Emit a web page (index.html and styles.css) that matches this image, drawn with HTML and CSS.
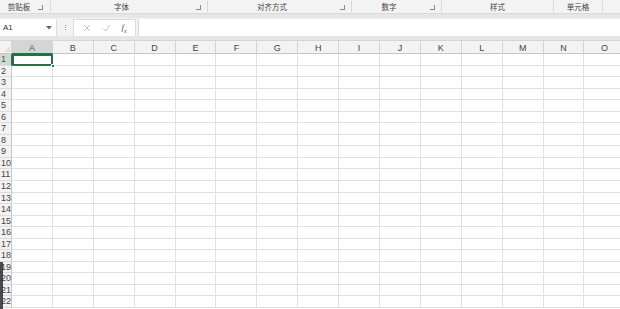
FILE: index.html
```html
<!DOCTYPE html>
<html lang="zh-CN">

<head>
    <meta charset="UTF-8">
    <title>Excel</title>
    <link rel="stylesheet" href="styles.css">
</head>

<body>
    <div class="ribbon-groups">
        <div class="group g-clip"><span class="label">剪贴板</span><span class="launcher"></span></div>
        <div class="group g-font"><span class="label">字体</span><span class="launcher"></span></div>
        <div class="group g-align"><span class="label">对齐方式</span><span class="launcher"></span></div>
        <div class="group g-num"><span class="label">数字</span><span class="launcher"></span></div>
        <div class="group g-style"><span class="label">样式</span></div>
        <div class="group g-cell"><span class="label">单元格</span></div>
        <div class="group g-rest"></div>
    </div>
    <div class="ribbon-gap"></div>

    <div class="formula-bar">
        <div class="name-box">
            <span>A1</span>
            <svg width="6" height="4" viewBox="0 0 6 4"><path d="M0 0h6L3 3.5z" fill="#666" /></svg>
        </div>
        <div class="dots"><i></i><i></i><i></i></div>
        <div class="fx-box">
            <svg width="8" height="8" viewBox="0 0 8 8"><path d="M1 1l6 6M7 1L1 7" stroke="#c4c4c4" stroke-width="1" /></svg>
            <svg width="9" height="8" viewBox="0 0 9 8"><path d="M1 4.5l2.5 2.5L8 1" stroke="#c4c4c4" stroke-width="1" fill="none" /></svg>
            <span class="fx">f<sub>x</sub></span>
        </div>
        <div class="formula-input"></div>
    </div>
    <div class="sheet-gap"></div>

    <div class="sheet" id="sheet"></div>
    <div class="artifact"></div>

    <script>
        const cols = "ABCDEFGHIJKLMNO".split("");
        const sheet = document.getElementById("sheet");
        let html = '<div class="corner"></div>';
        cols.forEach((c, i) => {
            html += `<div class="col-head${i === 0 ? ' active' : ''}">${c}</div>`;
        });
        for (let r = 1; r <= 22; r++) {
            html += `<div class="row-head${r === 1 ? ' active' : ''}">${r}</div>`;
            cols.forEach((c, i) => {
                const sel = r === 1 && i === 0 ? ' selected' : '';
                html += `<div class="cell${sel}"></div>`;
            });
        }
        sheet.innerHTML = html;
    </script>
</body>

</html>
```

FILE: styles.css
```css
body {
    margin: 0;
    width: 620px;
    height: 309px;
    overflow: hidden;
    background: #fff;
    font-family: "Noto Sans CJK SC", "Liberation Sans", sans-serif;
    color: #444;
    position: relative;
}

.ribbon-groups {
    display: flex;
    height: 13px;
    background: #f3f3f3;
    font-size: 7.5px;
    line-height: 13px;
}

.group {
    display: flex;
    align-items: center;
    border-right: 1px solid #d9d9d9;
    box-sizing: border-box;
    height: 11px;
    margin-top: 1px;
}

.group .label {
    flex: 1;
    text-align: center;
    color: #444;
}

.g-clip { width: 51px; }
.g-clip .label { flex: none; width: 38px; }
.g-font { width: 157px; }
.g-align { width: 144px; }
.g-num { width: 90px; }
.g-style { width: 112px; }
.g-cell { width: 49px; }
.g-rest { flex: 1; border-right: none; }

.launcher {
    width: 4px;
    height: 4px;
    border-right: 1px solid #888;
    border-bottom: 1px solid #888;
    margin: 2px 6px 0 4px;
}

.g-clip .launcher { margin-left: 0; }

.ribbon-gap {
    height: 5px;
    background: #e6e6e6;
    border-top: 1px solid #dadada;
    box-sizing: border-box;
}

.formula-bar {
    display: flex;
    align-items: center;
    height: 18px;
    background: #f3f3f3;
    padding-top: 1px;
    box-sizing: border-box;
}

.name-box {
    width: 57px;
    height: 17px;
    background: #fff;
    border-right: 1px solid #dcdcdc;
    box-sizing: border-box;
    display: flex;
    align-items: center;
    justify-content: space-between;
    padding: 0 4px 0 3px;
    font-family: "Liberation Sans", sans-serif;
    font-size: 8px;
    color: #333;
}

.dots {
    width: 16px;
    display: flex;
    flex-direction: column;
    align-items: center;
    gap: 1px;
}

.dots i {
    width: 1px;
    height: 1px;
    background: #999;
}

.fx-box {
    width: 63px;
    height: 17px;
    background: #fff;
    border: 1px solid #dcdcdc;
    border-bottom: none;
    box-sizing: border-box;
    display: flex;
    align-items: center;
    justify-content: space-around;
    padding: 0 3px 0 4px;
}

.fx {
    font-family: "Liberation Serif", serif;
    font-style: italic;
    font-size: 9px;
    color: #555;
}

.fx sub {
    font-size: 6px;
}

.formula-input {
    flex: 1;
    height: 17px;
    margin-left: 2px;
    background: #fff;
    border-left: 1px solid #dcdcdc;
}

.sheet-gap {
    height: 5px;
    background: #e6e6e6;
    border-bottom: 1px solid #d4d4d4;
    box-sizing: border-box;
}

.sheet {
    display: grid;
    grid-template-columns: 12px repeat(15, 40.9px);
    grid-template-rows: 13px repeat(22, 11.55px);
    font-family: "Liberation Sans", sans-serif;
}

.corner {
    background: #f3f3f3;
    border-right: 1px solid #d4d4d4;
    border-bottom: 1px solid #c6c6c6;
    position: relative;
}

.corner::after {
    content: "";
    position: absolute;
    right: 1px;
    bottom: 1px;
    border-left: 6px solid transparent;
    border-bottom: 6px solid #dedede;
}

.col-head {
    background: #f3f3f3;
    border-right: 1px solid #d4d4d4;
    border-bottom: 1px solid #c6c6c6;
    text-align: center;
    font-size: 9px;
    line-height: 14px;
    color: #444;
}

.col-head.active {
    background: #d5d5d5;
    color: #217346;
    border-bottom: 1px solid #217346;
}

.row-head {
    background: #f3f3f3;
    border-right: 1px solid #c6c6c6;
    border-bottom: 1px solid #dcdcdc;
    text-align: left;
    padding-left: 1px;
    font-size: 9px;
    line-height: 11.5px;
    color: #444;
    overflow: hidden;
    white-space: nowrap;
}

.row-head.active {
    background: #d5d5d5;
    color: #217346;
    border-right: 1px solid #217346;
}

.cell {
    border-right: 1px solid #e1e1e1;
    border-bottom: 1px solid #e1e1e1;
    box-sizing: border-box;
}

.cell.selected {
    border: 1px solid #217346;
    box-shadow: inset 0 0 0 1px #217346;
    position: relative;
}

.cell.selected::after {
    content: "";
    position: absolute;
    right: -3px;
    bottom: -3px;
    width: 4px;
    height: 4px;
    background: #217346;
    border: 1px solid #fff;
    box-sizing: border-box;
}

.artifact {
    position: absolute;
    left: 0;
    top: 262px;
    width: 3px;
    height: 47px;
    background: #2b2b36;
    opacity: 0.85;
}
```
